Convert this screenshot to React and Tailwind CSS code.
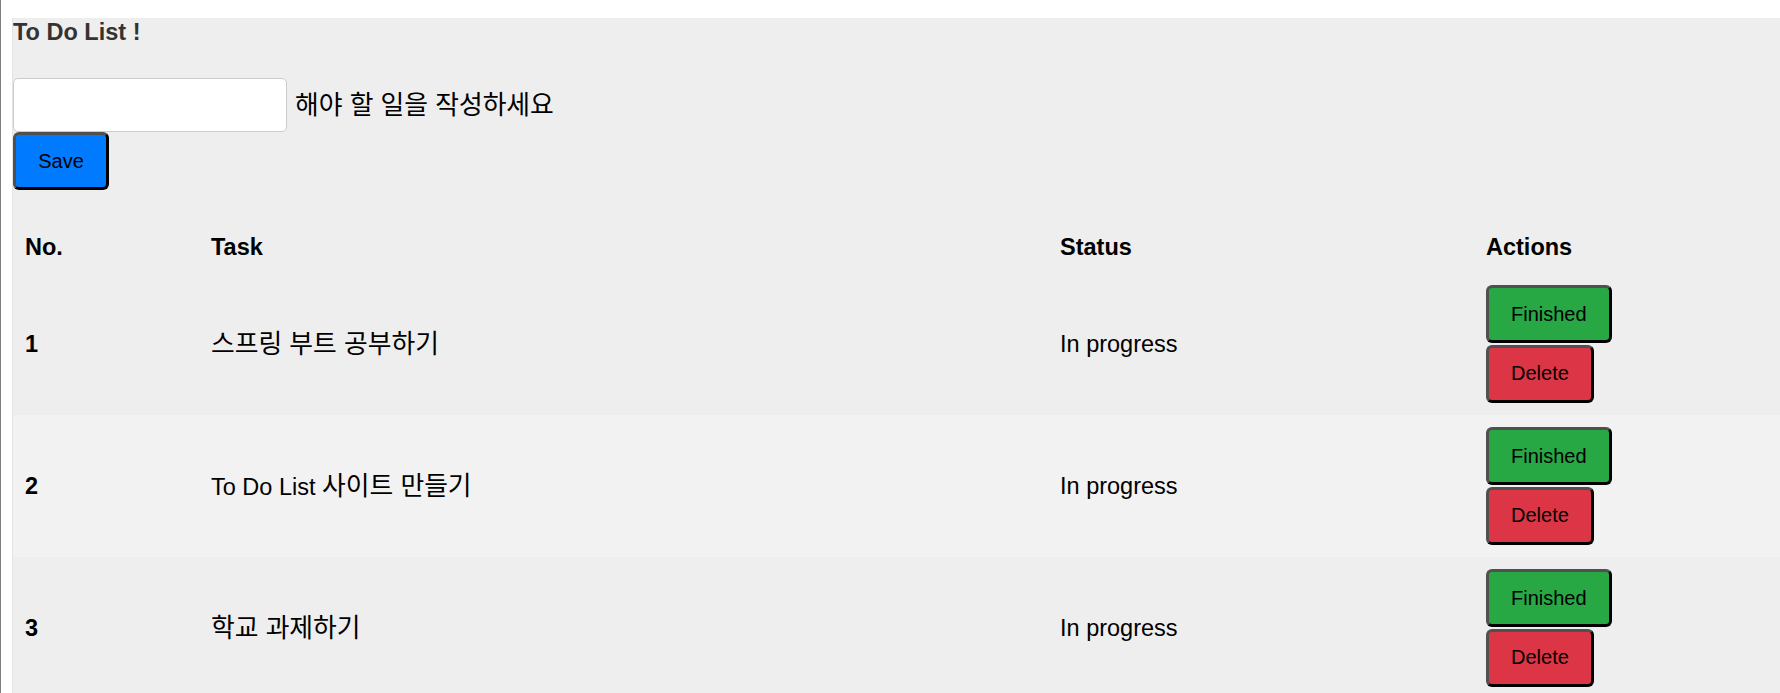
import React from 'react';

const tasks = [
  { id: 1, task: [null, '스프링 부트 공부하기'], status: 'In progress' },
  { id: 2, task: ['To Do List ', '사이트 만들기'], status: 'In progress' },
  { id: 3, task: [null, '학교 과제하기'], status: 'In progress' },
];

// shared look of the chunky bevelled buttons
const btn =
  'h-[58px] px-[22px] flex items-center justify-center text-[20px] leading-[23px] text-black rounded-[6px] border-[3px] border-t-[#505050] border-l-[#505050] border-r-black border-b-black';

const cols = 'grid grid-cols-[186px_849px_426px_1fr] items-center';

// hangul runs are set a touch larger so they take the width of the original font
const Ko = ({ children }) => <span className="text-[25.8px] leading-[28px]">{children}</span>;

export default function App() {
  return (
    <div className="h-[693px] overflow-hidden bg-white border-l border-[#7f7f7f] pl-[11px] pt-[18px] font-['Liberation_Sans','Noto_Sans_CJK_KR',sans-serif]">
      <div className="bg-[#eeeeee] h-full border-l border-[#e4e4e4]">
        <h1 className="text-[23.5px] leading-[28px] font-bold text-[#333]">To Do List !</h1>

        {/* input form */}
        <div className="mt-[32px] flex items-center">
          <input
            type="text"
            className="w-[274px] h-[54px] bg-white border border-[#cccccc] rounded-[5px] outline-none"
          />
          <span className="ml-[8px] text-[23.5px] leading-[27px] text-black">
            <Ko>해야 할 일을 작성하세요</Ko>
          </span>
        </div>
        <button className={`${btn} w-[96px] bg-[#007bff]`}>Save</button>

        {/* task table */}
        <div className="mt-[31px] text-[23.5px] leading-[28px] text-black">
          <div className={`${cols} h-[52px] font-bold`}>
            <div className="px-[12px]">No.</div>
            <div className="px-[12px]">Task</div>
            <div className="px-[12px]">Status</div>
            <div className="px-[12px]">Actions</div>
          </div>
          {tasks.map((t, i) => (
            <div
              key={t.id}
              className={`${cols} h-[142px] ${i % 2 === 1 ? 'bg-[#f2f2f2]' : 'bg-[#eeeeee]'}`}
            >
              <div className="px-[12px] font-bold">{t.id}</div>
              <div className="px-[12px]">
                {t.task[0]}
                <Ko>{t.task[1]}</Ko>
              </div>
              <div className="px-[12px]">{t.status}</div>
              <div className="px-[12px] flex flex-col items-start gap-[1.5px]">
                <button className={`${btn} bg-[#28a745]`}>Finished</button>
                <button className={`${btn} bg-[#dc3545]`}>Delete</button>
              </div>
            </div>
          ))}
        </div>
      </div>
    </div>
  );
}
